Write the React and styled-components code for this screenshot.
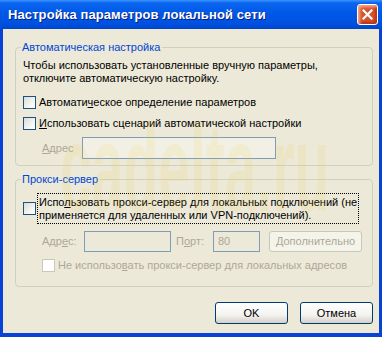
import styled, { createGlobalStyle } from 'styled-components';

const GlobalStyle = createGlobalStyle`
	html, body {
		margin: 0;
		padding: 0;
		background: #ffffff;
	}
	body {
		font-family: "Liberation Sans", Arial, sans-serif;
		font-size: 11px;
	}
`;

const Window = styled.div`
	position: relative;
	width: 382px;
	height: 337px;
	display: flex;
	flex-direction: column;
	overflow: hidden;
	background: #0842d6;
`;

const TitleBar = styled.div`
	height: 29px;
	flex: none;
	display: flex;
	align-items: center;
	justify-content: space-between;
	padding: 0 4px 0 8px;
	background: linear-gradient(
		to bottom,
		#3d95ff 0%,
		#0a66f0 10%,
		#0058e6 45%,
		#0052e0 80%,
		#0045cc 100%
	);
`;

const Title = styled.span`
	color: #ffffff;
	font-weight: bold;
	font-size: 13px;
	white-space: nowrap;
	text-shadow: 1px 1px 0 #0a1e80;
	letter-spacing: 0.1px;
`;

const CloseButton = styled.div`
	flex: none;
	width: 21px;
	height: 21px;
	box-sizing: border-box;
	border: 1px solid #ffffff;
	border-radius: 3px;
	background: #d8532b;
	box-shadow: inset 2px 2px 3px rgba(255, 190, 160, 0.8), inset -2px -2px 3px rgba(150, 30, 10, 0.6);
	display: flex;
	align-items: center;
	justify-content: center;
`;

const Body = styled.div`
	flex: 1;
	margin: 0 3px 4px 3px;
	background: #ece9d8;
	padding: 0 6px 0 12px;
	display: flex;
	flex-direction: column;
	white-space: nowrap;
`;

const Group = styled.fieldset`
	margin: ${({ $top }) => $top}px 0 0 0;
	padding: 0 7px ${({ $bottom }) => $bottom}px 7px;
	border: 1px solid #d0d0bf;
	border-radius: 4px;
	min-width: 0;
`;

const Legend = styled.legend`
	color: #0046d5;
	padding: 0 2px 0 1px;
	margin-left: -2px;
	line-height: 13px;
	height: 13px;
`;

const Text = styled.div`
	margin-top: 5px;
	line-height: 13px;
	color: #000000;
`;

const Row = styled.div`
	display: flex;
	align-items: center;
	margin-top: ${({ $top }) => $top}px;
	padding-left: ${({ $indent }) => $indent || 0}px;
	line-height: 13px;
	color: ${({ $disabled }) => ($disabled ? '#aca899' : '#000000')};
`;

const Box = styled.span`
	flex: none;
	width: 11px;
	height: 11px;
	border: 1px solid ${({ $disabled }) => ($disabled ? '#cac8bb' : '#1c5180')};
	background: ${({ $disabled }) =>
		$disabled ? '#ffffff' : 'linear-gradient(135deg, #dcdcd7 0%, #f4f4f0 60%, #ffffff 100%)'};
	margin-right: 3px;
`;

const FocusLabel = styled.span`
	outline: 1px dotted #000000;
	outline-offset: 0;
	padding: 2px 1px 1px 1px;
	margin-left: -1px;
`;

const Label = styled.span`
	width: ${({ $w }) => $w}px;
	padding-left: ${({ $pl }) => $pl || 0}px;
	box-sizing: border-box;
	flex: none;
	color: #aca899;
`;

const Input = styled.div`
	flex: none;
	width: ${({ $w }) => $w}px;
	height: ${({ $h }) => $h || 20}px;
	margin-left: ${({ $ml }) => $ml || 0}px;
	border: 1px solid #7f9db9;
	background: ${({ $white }) => ($white ? 'rgba(255,255,255,0.35)' : 'transparent')};
	color: #aca899;
	display: flex;
	align-items: center;
	padding-left: 4px;
	box-sizing: border-box;
`;

const Button = styled.div`
	flex: none;
	width: ${({ $w }) => $w}px;
	height: ${({ $h }) => $h || 22}px;
	margin-left: ${({ $ml }) => $ml || 0}px;
	box-sizing: border-box;
	border: 1px solid ${({ $disabled }) => ($disabled ? '#c9c7ba' : '#003c74')};
	border-radius: 3px;
	background: ${({ $disabled }) =>
		$disabled ? '#f5f4ea' : 'linear-gradient(to bottom, #ffffff 0%, #f3f3ef 60%, #d6d0c5 100%)'};
	color: ${({ $disabled }) => ($disabled ? '#aca899' : '#000000')};
	display: flex;
	align-items: center;
	justify-content: center;
`;

const Footer = styled.div`
	display: flex;
	justify-content: flex-end;
	gap: 12px;
	margin-top: 15px;
`;

const Watermark = styled.div`
	position: absolute;
	left: 60px;
	top: 106px;
	font-family: "Liberation Sans", Arial, sans-serif;
	font-size: 124px;
	font-weight: bold;
	line-height: 1;
	transform: scaleX(0.46);
	transform-origin: left top;
	color: rgba(240, 200, 50, 0.11);
	pointer-events: none;
	white-space: nowrap;
`;

export default function App() {
	return (
		<>
			<GlobalStyle />
			<Window>
				<TitleBar>
					<Title>Настройка параметров локальной сети</Title>
					<CloseButton>
						<svg width="11" height="11" viewBox="0 0 11 11">
							<path d="M1.5 1.5 L9.5 9.5 M9.5 1.5 L1.5 9.5" stroke="#ffffff" strokeWidth="2.2" strokeLinecap="square" />
						</svg>
					</CloseButton>
				</TitleBar>
				<Body>
					<Group $top={12} $bottom={6}>
						<Legend>Автоматическая настройка</Legend>
						<Text>
							Чтобы использовать установленные вручную параметры,
							<br />
							отключите автоматическую настройку.
						</Text>
						<Row $top={11}>
							<Box />
							<span>
								Автомати<u>ч</u>еское определение параметров
							</span>
						</Row>
						<Row $top={8}>
							<Box />
							<span>
								<u>И</u>спользовать сценарий автоматической настройки
							</span>
						</Row>
						<Row $top={7} $indent={19}>
							<Label $w={40}>
								<u>А</u>дрес
							</Label>
							<Input $w={194} $h={22} $white />
						</Row>
					</Group>
					<Group $top={7} $bottom={14}>
						<Legend>Прокси-сервер</Legend>
						<Row $top={8}>
							<Box />
							<FocusLabel>
								Испо<u>л</u>ьзовать прокси-сервер для локальных подключений (не
								<br />
								применяется для удаленных или VPN-подключений).
							</FocusLabel>
						</Row>
						<Row $top={8} $indent={19}>
							<Label $w={42}>
								Адр<u>е</u>с:
							</Label>
							<Input $w={87} $h={21} />
							<Label $w={42} $pl={5}>
								П<u>о</u>рт:
							</Label>
							<Input $w={47} $h={21}>80</Input>
							<Button $w={93} $h={21} $ml={9} $disabled>
								<span>
									<u>Д</u>ополнительно
								</span>
							</Button>
						</Row>
						<Row $top={7} $indent={19} $disabled>
							<Box $disabled />
							<span>
								Не использо<u>в</u>ать прокси-сервер для локальных адресов
							</span>
						</Row>
					</Group>
					<Footer>
						<Button $w={73} $h={22}>OK</Button>
						<Button $w={73} $h={22}>Отмена</Button>
					</Footer>
				</Body>
				<Watermark>cadelta.ru</Watermark>
			</Window>
		</>
	);
}
